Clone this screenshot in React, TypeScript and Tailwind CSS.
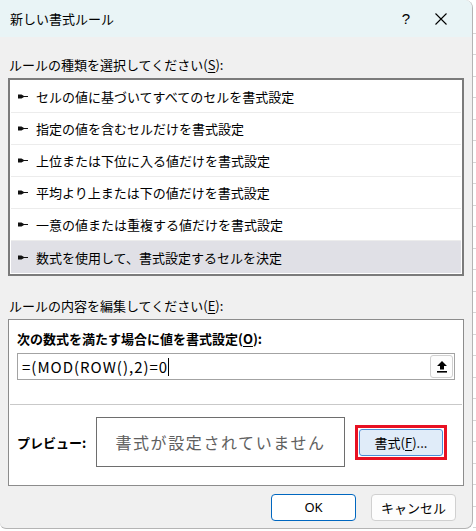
const rules = [
  "セルの値に基づいてすべてのセルを書式設定",
  "指定の値を含むセルだけを書式設定",
  "上位または下位に入る値だけを書式設定",
  "平均より上または下の値だけを書式設定",
  "一意の値または重複する値だけを書式設定",
  "数式を使用して、書式設定するセルを決定",
];

function Bullet() {
  return (
    <svg width="10" height="5" viewBox="0 0 10 5" className="shrink-0">
      <path d="M0 0.5H3.5L6 2H10V3H6L3.5 4.5H0Z" fill="#111" />
    </svg>
  );
}

function RefIcon() {
  return (
    <svg width="12" height="13" viewBox="0 0 12 13">
      <path d="M6 1L11 6H8V9.5H4V6H1Z" fill="#000" />
      <rect x="1" y="11" width="10" height="1.6" fill="#000" />
    </svg>
  );
}

export default function App() {
  return (
    <div className="flex w-[476px] h-[531px] bg-white overflow-hidden font-['Noto_Sans_CJK_JP','Noto_Sans',sans-serif] text-[13px] text-black">
      {/* dialog */}
      <div className="flex flex-col w-[473px] h-[529px] shrink-0 bg-[#f0f0f0] rounded-r-lg rounded-bl-md border-r border-b border-[#b4b4b4] overflow-hidden">
        <div className="flex items-center h-[37px] shrink-0 bg-[#e9f4f6] pl-[10px]">
          <span className="leading-none">新しい書式ルール</span>
          <span className="ml-auto w-[56px] text-center text-[15px] leading-none font-['Liberation_Sans',sans-serif]">?</span>
          <svg width="12" height="12" viewBox="0 0 12 12" className="ml-[1px] mr-[25px]">
            <path d="M0.5 0.5L11.5 11.5M11.5 0.5L0.5 11.5" stroke="#000" strokeWidth="1.1" />
          </svg>
        </div>

        <div className="flex flex-col px-[8px]">
          <div className="h-[41px] flex items-end pb-[7px] pl-[1px] leading-none">
            ルールの種類を選択してください(<span className="underline underline-offset-2">S</span>):
          </div>
          <div className="border-2 border-[#7b7b7b] bg-white p-px">
            {rules.map((r, i) => (
              <div
                key={r}
                className={`flex items-center gap-[8px] h-[32px] pl-[7px] leading-none ${
                  i === rules.length - 1 ? "bg-[#e0e0e6]" : "border-b border-[#ececec]"
                }`}
              >
                <Bullet />
                <span>{r}</span>
              </div>
            ))}
          </div>

          <div className="h-[43px] flex items-end pb-[7px] pl-[1px] leading-none">
            ルールの内容を編集してください(<span className="underline underline-offset-2">E</span>):
          </div>
          <div className="flex flex-col h-[167px] border border-[#8c8c8c] bg-white">
            <div className="px-[8px] pt-[12px] font-bold leading-none">
              次の数式を満たす場合に値を書式設定(<span className="underline underline-offset-2">O</span>):
            </div>
            <div className="mx-[8px] mt-[8px] flex items-center h-[27px] border border-[#a3a3a3] pl-[4px] pr-[1px]">
              <span className="text-[15px] leading-none tracking-[1px]">=(MOD(ROW(),2)=0</span>
              <span className="w-px h-[18px] bg-black" />
              <div className="ml-auto flex items-center justify-center w-[23px] h-[23px] border border-[#d0d0d0] rounded-[3px] bg-[#fdfdfd]">
                <RefIcon />
              </div>
            </div>
            <div className="mx-px mt-[24px] border-t border-[#c9c9c9]" />
            <div className="flex items-center h-[74px] px-[8px]">
              <span className="w-[79px] font-bold leading-none">プレビュー:</span>
              <div className="flex items-center justify-center w-[249px] h-[50px] border border-[#6e6e6e] text-[16px] text-[#606060] tracking-[1.6px] leading-none">
                書式が設定されていません
              </div>
              <div className="ml-[10px] w-[92px] h-[35px] border-[3px] border-[#e81123] p-px">
                <div className="flex items-center justify-center h-full bg-[#e0ecf9] border border-[#4a8fd8] rounded-[3px] leading-none">
                  書式(<span className="underline underline-offset-2">F</span>)...
                </div>
              </div>
            </div>
          </div>

          <div className="flex justify-end gap-[15px] mt-[8px] pr-[8px]">
            <div className="flex items-center justify-center w-[85px] h-[27px] rounded-[4px] border border-[#0067c0] bg-white leading-none font-['Noto_Sans',sans-serif] text-[13px]">
              OK
            </div>
            <div className="flex items-center justify-center w-[85px] h-[27px] rounded-[4px] border border-[#d0d0d0] bg-[#fdfdfd] leading-none">
              キャンセル
            </div>
          </div>
        </div>
      </div>

      {/* sheet grid behind */}
      <div className="flex flex-col flex-1 pt-[12px]">
        {Array.from({ length: 24 }).map((_, i) => (
          <div key={i} className="h-[21.5px] shrink-0 border-b border-[#d6d6d6]" />
        ))}
      </div>
    </div>
  );
}
